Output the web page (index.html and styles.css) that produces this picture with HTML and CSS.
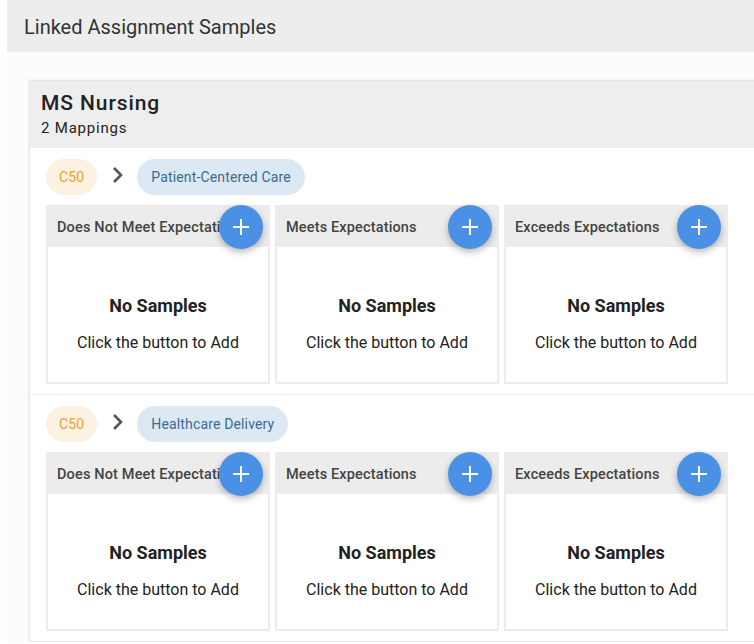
FILE: index.html
```html
<!DOCTYPE html>
<html>
<head>
<meta charset="utf-8">
<link rel="stylesheet" href="styles.css">
</head>
<body>
<div class="page">
  <div class="topbar">Linked Assignment Samples</div>
  <div class="content">
    <div class="card">
      <div class="card-head">
        <div class="card-title">MS Nursing</div>
        <div class="card-sub">2 Mappings</div>
      </div>

      <div class="mapping">
        <div class="chips">
          <span class="chip chip-code">C50</span>
          <svg class="chev" width="14" height="20" viewBox="0 0 14 20"><path d="M3 3 L10 10 L3 17" fill="none" stroke="#555" stroke-width="2.6"/></svg>
          <span class="chip chip-topic">Patient-Centered Care</span>
        </div>
        <div class="cols">
          <div class="col">
            <div class="col-head">Does Not Meet Expectations</div>
            <button class="add"><svg width="18" height="18" viewBox="0 0 18 18"><path d="M9 1V17M1 9H17" stroke="#fff" stroke-width="2"/></svg></button>
            <div class="col-body"><div class="empty-title">No Samples</div><div class="empty-text">Click the button to Add</div></div>
          </div>
          <div class="col">
            <div class="col-head">Meets Expectations</div>
            <button class="add"><svg width="18" height="18" viewBox="0 0 18 18"><path d="M9 1V17M1 9H17" stroke="#fff" stroke-width="2"/></svg></button>
            <div class="col-body"><div class="empty-title">No Samples</div><div class="empty-text">Click the button to Add</div></div>
          </div>
          <div class="col">
            <div class="col-head">Exceeds Expectations</div>
            <button class="add"><svg width="18" height="18" viewBox="0 0 18 18"><path d="M9 1V17M1 9H17" stroke="#fff" stroke-width="2"/></svg></button>
            <div class="col-body"><div class="empty-title">No Samples</div><div class="empty-text">Click the button to Add</div></div>
          </div>
        </div>
      </div>

      <div class="mapping sep">
        <div class="chips">
          <span class="chip chip-code">C50</span>
          <svg class="chev" width="14" height="20" viewBox="0 0 14 20"><path d="M3 3 L10 10 L3 17" fill="none" stroke="#555" stroke-width="2.6"/></svg>
          <span class="chip chip-topic">Healthcare Delivery</span>
        </div>
        <div class="cols">
          <div class="col">
            <div class="col-head">Does Not Meet Expectations</div>
            <button class="add"><svg width="18" height="18" viewBox="0 0 18 18"><path d="M9 1V17M1 9H17" stroke="#fff" stroke-width="2"/></svg></button>
            <div class="col-body"><div class="empty-title">No Samples</div><div class="empty-text">Click the button to Add</div></div>
          </div>
          <div class="col">
            <div class="col-head">Meets Expectations</div>
            <button class="add"><svg width="18" height="18" viewBox="0 0 18 18"><path d="M9 1V17M1 9H17" stroke="#fff" stroke-width="2"/></svg></button>
            <div class="col-body"><div class="empty-title">No Samples</div><div class="empty-text">Click the button to Add</div></div>
          </div>
          <div class="col">
            <div class="col-head">Exceeds Expectations</div>
            <button class="add"><svg width="18" height="18" viewBox="0 0 18 18"><path d="M9 1V17M1 9H17" stroke="#fff" stroke-width="2"/></svg></button>
            <div class="col-body"><div class="empty-title">No Samples</div><div class="empty-text">Click the button to Add</div></div>
          </div>
        </div>
      </div>
    </div>
  </div>
</div>
</body>
</html>
```

FILE: styles.css
```css
html, body {
  margin: 0;
  padding: 0;
  overflow: hidden;
  background: #fff;
}
body {
  font-family: Roboto, "Liberation Sans", sans-serif;
  color: #222;
}
.page {
  padding-left: 7px;
  width: 800px;
}
.topbar {
  height: 52px;
  line-height: 54px;
  background: #ededed;
  padding-left: 17px;
  font-size: 20px;
  color: #333;
}
.content {
  background: #fcfcfc;
  padding: 28px 0 0 22px;
}
.card {
  width: 760px;
  background: #fff;
  border: 1px solid #e6e6e6;
  border-right: none;
  box-shadow: 0 0 3px rgba(0,0,0,0.08);
}
.card-head {
  background: #eeeeee;
  padding: 10px 11px 9px;
}
.card-title {
  font-size: 21px;
  font-weight: 500;
  line-height: 24px;
  letter-spacing: 0.9px;
  color: #222;
}
.card-sub {
  font-size: 15px;
  line-height: 22px;
  margin-top: 2px;
  letter-spacing: 0.8px;
  color: #222;
}
.mapping {
  padding: 11px 16px 10px;
}
.mapping.sep {
  border-top: 1px solid #eeeeee;
}
.chips {
  display: flex;
  align-items: center;
  height: 36px;
  margin-bottom: 10px;
}
.chip {
  height: 36px;
  line-height: 37px;
  border-radius: 18px;
  font-size: 14px;
  padding: 0 14px;
  letter-spacing: 0.15px;
}
.chip-code {
  background: #fdf1e2;
  color: #f0a132;
  padding: 0 13px;
}
.chip-topic {
  background: #dce9f5;
  color: #3e6a8e;
}
.chev {
  margin: -4px 12px 0 14px;
}
.cols {
  display: grid;
  grid-template-columns: 224px 224px 224px;
  column-gap: 5px;
}
.col {
  position: relative;
  border: 2px solid #ececec;
  height: 175px;
  display: flex;
  flex-direction: column;
  background: #fff;
}
.col-head {
  height: 40px;
  line-height: 41px;
  background: #ececec;
  padding-left: 9px;
  font-size: 14.5px;
  font-weight: 500;
  letter-spacing: 0.15px;
  color: #444;
  white-space: nowrap;
  overflow: hidden;
}
.add {
  position: absolute;
  top: -2px;
  right: 5px;
  width: 44px;
  height: 44px;
  border-radius: 50%;
  border: none;
  padding: 0;
  background: #4a91e6;
  box-shadow: 0 3px 7px rgba(0,0,0,0.28);
  display: flex;
  align-items: center;
  justify-content: center;
}
.col-body {
  flex: 1;
  display: flex;
  flex-direction: column;
  align-items: center;
  padding-top: 47px;
}
.empty-title {
  font-size: 18px;
  font-weight: 700;
  line-height: 24px;
  color: #222;
}
.empty-text {
  margin-top: 13px;
  font-size: 16px;
  line-height: 24px;
  color: #222;
}
```
